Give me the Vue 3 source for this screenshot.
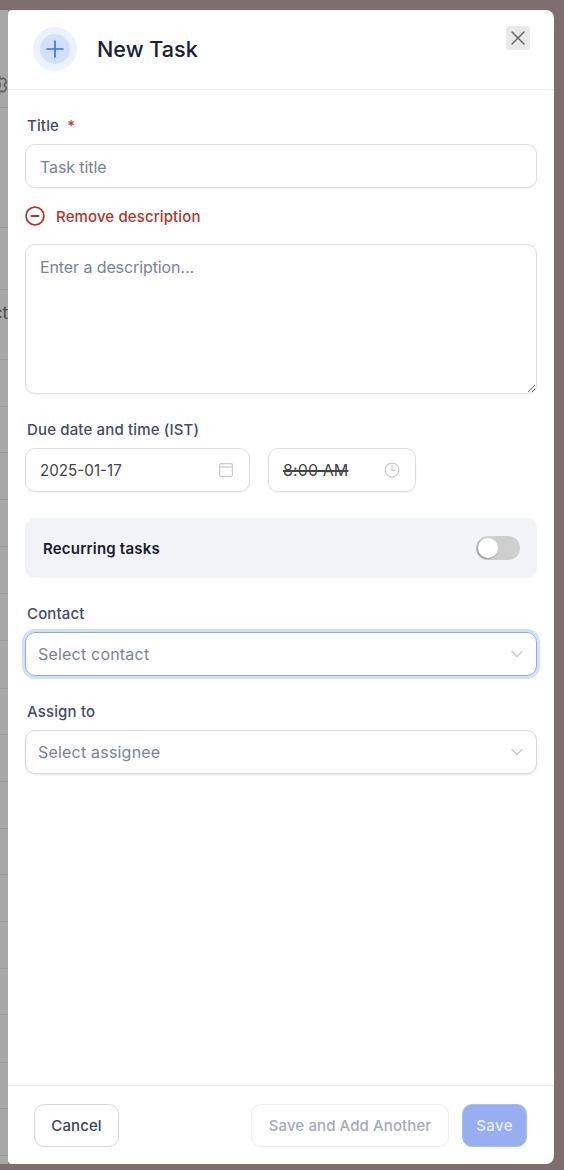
<script setup>
// row heights of the table that peeks out behind the modal
const rowHeights = [98, 120, 62, 70, 47, 46, 47, 47, 47, 47, 48, 46, 47, 47, 46, 47, 47, 46, 48, 46, 47]
</script>

<template>
  <div class="page">
    <div class="behind">
      <div v-for="(h, i) in rowHeights" :key="i" class="behind-row" :class="{ 'row-gear': i === 0, 'row-text': i === 3 }" :style="{ height: h + 'px' }">
        <svg v-if="i === 0" class="gear" viewBox="0 0 24 24" fill="none" stroke="#5f6160" stroke-width="1.5">
          <path stroke-linecap="round" stroke-linejoin="round" d="M9.594 3.94c.09-.542.56-.94 1.11-.94h2.593c.55 0 1.02.398 1.11.94l.213 1.281c.063.374.313.686.645.87.074.04.147.083.22.127.325.196.72.257 1.075.124l1.217-.456a1.125 1.125 0 0 1 1.37.49l1.296 2.247a1.125 1.125 0 0 1-.26 1.431l-1.003.827c-.293.241-.438.613-.43.992a7.723 7.723 0 0 1 0 .255c-.008.378.137.75.43.991l1.004.827c.424.35.534.955.26 1.43l-1.298 2.247a1.125 1.125 0 0 1-1.369.491l-1.217-.456c-.355-.133-.75-.072-1.076.124a6.47 6.47 0 0 1-.22.128c-.331.183-.581.495-.644.869l-.213 1.281c-.09.543-.56.94-1.11.94h-2.594c-.55 0-1.019-.398-1.11-.94l-.213-1.281c-.062-.374-.312-.686-.644-.87a6.52 6.52 0 0 1-.22-.127c-.325-.196-.72-.257-1.076-.124l-1.217.456a1.125 1.125 0 0 1-1.369-.49l-1.297-2.247a1.125 1.125 0 0 1 .26-1.431l1.004-.827c.292-.24.437-.613.43-.991a6.932 6.932 0 0 1 0-.255c.007-.38-.138-.751-.43-.992l-1.004-.827a1.125 1.125 0 0 1-.26-1.43l1.297-2.247a1.125 1.125 0 0 1 1.37-.491l1.216.456c.356.133.751.072 1.076-.124.072-.044.146-.086.22-.128.332-.183.582-.495.644-.869l.214-1.28Z" />
          <circle cx="12" cy="12" r="3" />
        </svg>
        <span v-if="i === 3">Contact</span>
      </div>
    </div>

    <div class="modal">
      <header class="modal-header">
        <div class="plus-halo">
          <div class="plus-circle">
            <svg width="20" height="20" viewBox="0 0 20 20" fill="none" stroke="#3f72f5" stroke-width="1.7" stroke-linecap="round">
              <path d="M10 2v16M2 10h16" />
            </svg>
          </div>
        </div>
        <h1>New Task</h1>
        <button class="btn-close" title="Close">
          <svg width="16" height="16" viewBox="0 0 16 16" fill="none" stroke="#5c5c5c" stroke-width="1.4" stroke-linecap="round">
            <path d="M2 2l12 12M14 2L2 14" />
          </svg>
        </button>
      </header>

      <div class="modal-body">
        <label class="field-label title-label">Title <span class="required">*</span></label>
        <input class="text-input" type="text" placeholder="Task title" />

        <div class="remove-desc">
          <svg width="20" height="20" viewBox="0 0 20 20" fill="none" stroke="#b3352a" stroke-width="1.8" stroke-linecap="round">
            <circle cx="10" cy="10" r="8.9" />
            <path d="M6.5 10h7" stroke-width="2" />
          </svg>
          <span>Remove description</span>
        </div>

        <textarea class="desc-input" placeholder="Enter a description..."></textarea>

        <label class="field-label due-label">Due date and time (IST)</label>
        <div class="due-row">
          <div class="box date-box">
            <span class="date-text">2025-01-17</span>
            <svg width="16" height="16" viewBox="0 0 16 16" fill="none" stroke="#c8c9cc" stroke-width="1.2">
              <rect x="1.6" y="1.6" width="12.8" height="12.8" rx="1.4" />
              <path d="M1.6 5h12.8" />
            </svg>
          </div>
          <div class="box time-box">
            <span class="strike">8:00 AM</span>
            <svg width="16" height="16" viewBox="0 0 16 16" fill="none" stroke="#c8c9cc" stroke-width="1.2" stroke-linecap="round">
              <circle cx="8" cy="8" r="6.9" />
              <path d="M8 4v4.3h3" />
            </svg>
          </div>
        </div>

        <div class="recurring">
          <span>Recurring tasks</span>
          <div class="toggle"><div class="knob"></div></div>
        </div>

        <label class="field-label contact-label">Contact</label>
        <div class="select is-focused">
          <span>Select contact</span>
          <svg width="14" height="14" viewBox="0 0 14 14" fill="none" stroke="#c5c8d0" stroke-width="1.2" stroke-linecap="round" stroke-linejoin="round">
            <path d="M2 4.5l5 5 5-5" />
          </svg>
        </div>

        <label class="field-label assign-label">Assign to</label>
        <div class="select">
          <span>Select assignee</span>
          <svg width="14" height="14" viewBox="0 0 14 14" fill="none" stroke="#c5c8d0" stroke-width="1.2" stroke-linecap="round" stroke-linejoin="round">
            <path d="M2 4.5l5 5 5-5" />
          </svg>
        </div>
      </div>

      <footer class="modal-footer">
        <button class="btn btn-cancel">Cancel</button>
        <div class="footer-right">
          <button class="btn btn-another">Save and Add Another</button>
          <button class="btn btn-save">Save</button>
        </div>
      </footer>
    </div>
  </div>
</template>

<style>
html,
body {
  margin: 0;
  background: #7f6e6f;
}
</style>

<style scoped>
.page {
  display: flex;
  width: 564px;
  height: 1170px;
  box-sizing: border-box;
  padding: 10px 10px 6px 0;
  background: #7f6e6f;
  font-family: Inter, "Liberation Sans", sans-serif;
  overflow: hidden;
}

.behind {
  width: 8px;
  flex-shrink: 0;
  overflow: hidden;
  background: #a6a7a6;
}

.behind-row {
  box-sizing: border-box;
  display: flex;
  justify-content: flex-end;
  border-bottom: 1px solid #9a9b9a;
}

.row-gear {
  align-items: flex-end;
  padding-bottom: 9px;
}

.row-text {
  padding-top: 13px;
  font-size: 17px;
  line-height: 20px;
  color: #4a4b4b;
  white-space: nowrap;
}

.gear {
  width: 26px;
  height: 26px;
  flex-shrink: 0;
  margin-right: -2px;
}

.modal {
  width: 546px;
  flex-shrink: 0;
  display: flex;
  flex-direction: column;
  background: #fff;
  border-radius: 4px 8px 8px 4px;
}

.modal-header {
  height: 80px;
  box-sizing: border-box;
  display: flex;
  align-items: flex-start;
  padding: 17px 24px 0 25px;
  border-bottom: 1px solid #edeef2;
}

.plus-halo {
  width: 44px;
  height: 44px;
  border-radius: 50%;
  background: #ecf2fe;
  display: flex;
  align-items: center;
  justify-content: center;
  flex-shrink: 0;
}

.plus-circle {
  width: 30px;
  height: 30px;
  border-radius: 50%;
  background: #d3e0fc;
  display: flex;
  align-items: center;
  justify-content: center;
}

.modal-header h1 {
  margin: 7px 0 0 20px;
  font-size: 21.6px;
  line-height: 30px;
  font-weight: 500;
  color: #1b2030;
  flex: 1;
}

.btn-close {
  width: 24px;
  height: 24px;
  margin-top: -1px;
  padding: 0;
  border: none;
  border-radius: 3px;
  background: #e9e9e9;
  display: flex;
  align-items: center;
  justify-content: center;
}

.modal-body {
  flex: 1;
  display: flex;
  flex-direction: column;
  padding: 0 17px;
}

.field-label {
  margin-left: 2px;
  font-size: 15px;
  line-height: 20px;
  font-weight: 500;
  letter-spacing: 0.15px;
  color: #434c63;
}

.title-label {
  margin-top: 26px;
}

.required {
  color: #c8392e;
  margin-left: 4px;
}

.text-input {
  height: 44px;
  margin-top: 8px;
  box-sizing: border-box;
  padding: 2px 14px 0;
  border: 1px solid #dcdee7;
  border-radius: 10px;
  box-shadow: 0 1px 2px rgba(20, 25, 40, 0.06);
  font-family: inherit;
  font-size: 16px;
  letter-spacing: -0.1px;
  color: #3b445a;
  outline: none;
}

.text-input::placeholder,
.desc-input::placeholder {
  color: #7b8296;
  opacity: 1;
}

.remove-desc {
  display: flex;
  align-items: center;
  gap: 11px;
  margin-top: 18px;
  height: 20px;
  font-size: 15px;
  font-weight: 500;
  letter-spacing: 0.12px;
  color: #b3352a;
}

.remove-desc svg {
  flex-shrink: 0;
}

.desc-input {
  height: 150px;
  margin-top: 18px;
  box-sizing: border-box;
  padding: 11px 14px;
  border: 1px solid #dcdee7;
  border-radius: 10px;
  box-shadow: 0 1px 2px rgba(20, 25, 40, 0.06);
  font-family: inherit;
  font-size: 16px;
  line-height: 22px;
  letter-spacing: -0.1px;
  outline: none;
  display: block;
  width: 100%;
}

.due-label {
  margin-top: 26px;
}

.due-row {
  display: flex;
  gap: 18px;
  margin-top: 8px;
}

.box {
  height: 44px;
  box-sizing: border-box;
  display: flex;
  align-items: center;
  justify-content: space-between;
  padding: 0 15px 0 14px;
  border: 1px solid #dcdee7;
  border-radius: 10px;
  box-shadow: 0 1px 2px rgba(20, 25, 40, 0.06);
  font-size: 16px;
  color: #444;
}

.date-text {
  font-size: 15.2px;
}

.date-box {
  width: 225px;
}

.time-box {
  width: 148px;
}

.strike {
  text-decoration: line-through;
  text-decoration-thickness: 1.5px;
  letter-spacing: 0.1px;
}

.recurring {
  height: 60px;
  margin-top: 26px;
  display: flex;
  align-items: center;
  justify-content: space-between;
  padding: 0 17px 0 18px;
  border-radius: 10px;
  background: #f2f3f7;
  font-size: 15px;
  font-weight: 600;
  letter-spacing: 0.2px;
  color: #171c2c;
}

.toggle {
  width: 44px;
  height: 24px;
  border-radius: 12px;
  background: #cfcfcf;
  display: flex;
  align-items: center;
  padding-left: 2px;
  box-sizing: border-box;
}

.knob {
  width: 20px;
  height: 20px;
  border-radius: 50%;
  background: #fff;
  box-shadow: -1px 1px 2px rgba(0, 0, 0, 0.3);
}

.contact-label {
  margin-top: 26px;
}

.assign-label {
  margin-top: 26px;
}

.select {
  height: 44px;
  margin-top: 8px;
  box-sizing: border-box;
  display: flex;
  align-items: center;
  justify-content: space-between;
  padding: 0 12px;
  border: 1px solid #d5d7e1;
  border-radius: 10px;
  box-shadow: 0 1px 2px rgba(20, 25, 40, 0.12);
  font-size: 16px;
  letter-spacing: 0.2px;
  color: #7b8296;
}

.is-focused {
  border-color: #8aaaf5;
  box-shadow: 0 0 0 3px #d3e0fc;
}

.modal-footer {
  height: 79px;
  box-sizing: border-box;
  display: flex;
  align-items: flex-start;
  justify-content: space-between;
  padding: 18px 27px 0 26px;
  border-top: 1px solid #edeef2;
}

.footer-right {
  display: flex;
  gap: 13px;
}

.btn {
  height: 43px;
  box-sizing: border-box;
  border-radius: 10px;
  font-family: inherit;
  font-size: 15px;
  font-weight: 500;
  letter-spacing: 0.1px;
  padding: 0;
  background: #fff;
}

.btn-cancel {
  width: 85px;
  border: 1px solid #d5d7e1;
  color: #3b445a;
}

.btn-another {
  width: 198px;
  border: 1px solid #eceef3;
  color: #a6aab6;
}

.btn-save {
  width: 65px;
  border: 1px solid #a9bdf3;
  background: #97aff0;
  color: #e8eefc;
  letter-spacing: 0.4px;
}
</style>
